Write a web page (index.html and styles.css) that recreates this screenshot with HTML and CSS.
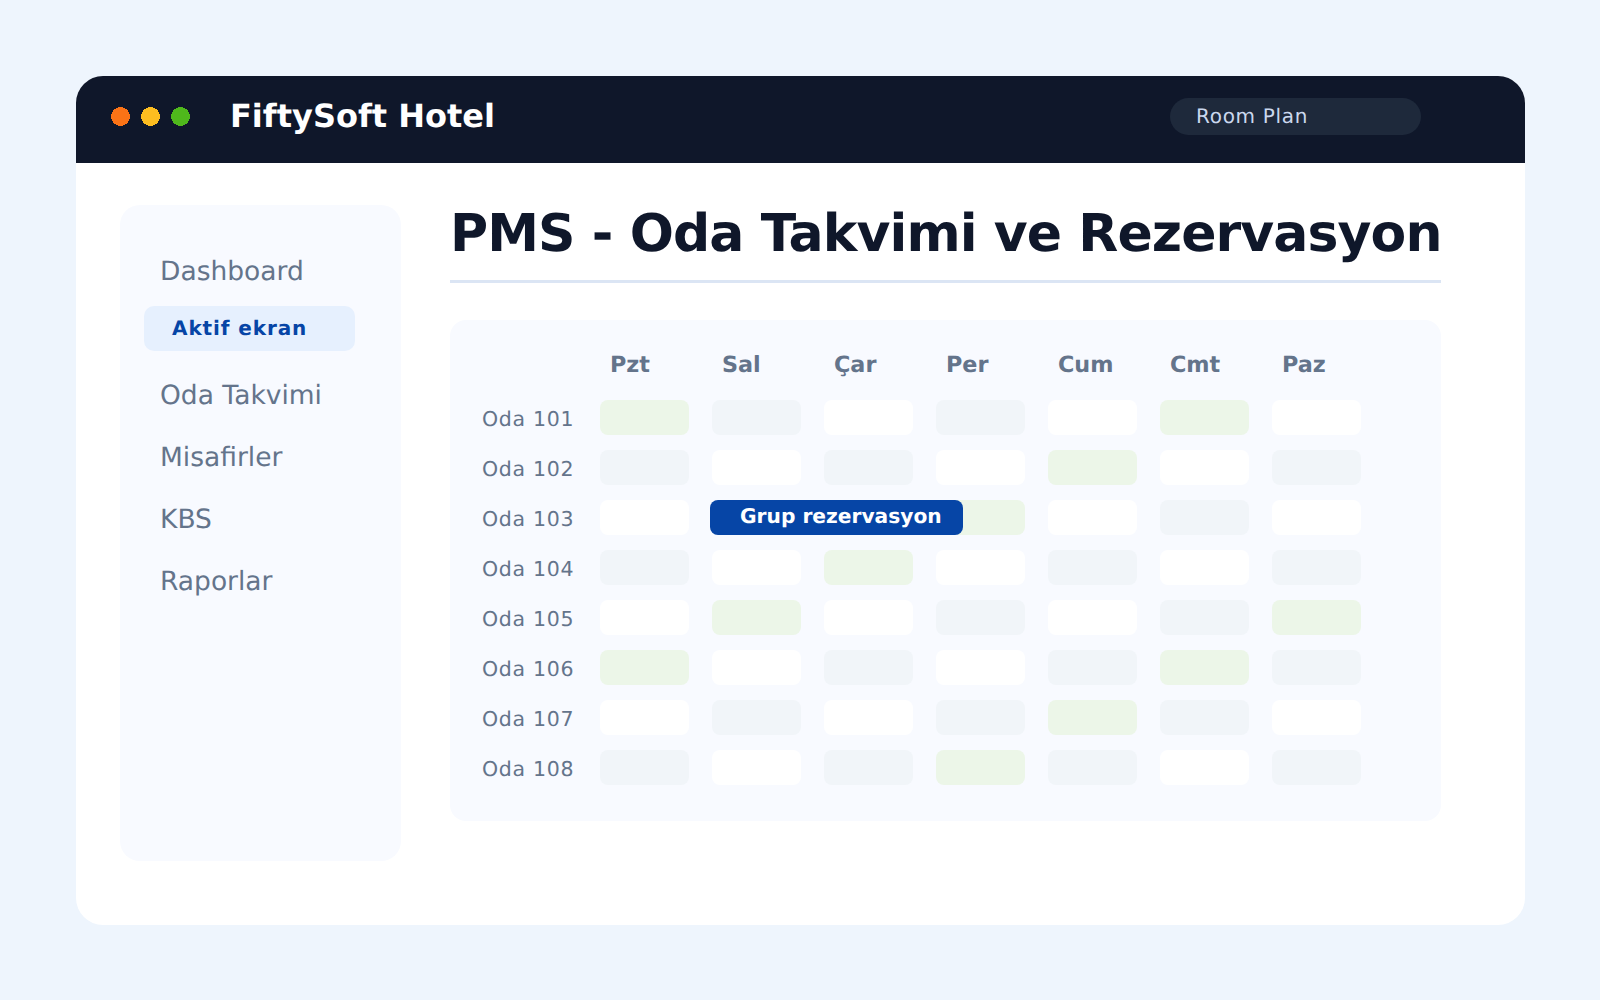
FILE: index.html
```html
<!DOCTYPE html>
<html lang="tr">
<head>
<meta charset="utf-8">
<title>FiftySoft Hotel</title>
<link rel="stylesheet" href="styles.css">
</head>
<body>
<div class="window">
  <header class="topbar">
    <svg class="dots" viewBox="0 0 79 19" width="79" height="19" aria-hidden="true">
      <circle class="orange" cx="9.5" cy="9.5" r="9.5"/>
      <circle class="yellow" cx="39.5" cy="9.5" r="9.5"/>
      <circle class="green" cx="69.5" cy="9.5" r="9.5"/>
    </svg>
    <div class="brand">FiftySoft Hotel</div>
    <div class="pill">Room Plan</div>
  </header>
  <div class="body">
    <aside class="sidebar">
      <div class="nav-item first">Dashboard</div>
      <div class="nav-active">Aktif ekran</div>
      <div class="nav-item">Oda Takvimi</div>
      <div class="nav-item">Misafirler</div>
      <div class="nav-item">KBS</div>
      <div class="nav-item">Raporlar</div>
    </aside>
    <main class="main">
      <h1 class="title">PMS - Oda Takvimi ve Rezervasyon</h1>
      <section class="card">
        <div class="grid">
          <div></div><div class="day">Pzt</div><div class="day">Sal</div><div class="day">Çar</div><div class="day">Per</div><div class="day">Cum</div><div class="day">Cmt</div><div class="day">Paz</div>

          <div class="room">Oda 101</div><div class="cell g"></div><div class="cell s"></div><div class="cell w"></div><div class="cell s"></div><div class="cell w"></div><div class="cell g"></div><div class="cell w"></div>
          <div class="room">Oda 102</div><div class="cell s"></div><div class="cell w"></div><div class="cell s"></div><div class="cell w"></div><div class="cell g"></div><div class="cell w"></div><div class="cell s"></div>
          <div class="room">Oda 103</div><div class="cell w"></div><div class="cell w anchor"><div class="booking">Grup rezervasyon</div></div><div class="cell s"></div><div class="cell g"></div><div class="cell w"></div><div class="cell s"></div><div class="cell w"></div>
          <div class="room">Oda 104</div><div class="cell s"></div><div class="cell w"></div><div class="cell g"></div><div class="cell w"></div><div class="cell s"></div><div class="cell w"></div><div class="cell s"></div>
          <div class="room">Oda 105</div><div class="cell w"></div><div class="cell g"></div><div class="cell w"></div><div class="cell s"></div><div class="cell w"></div><div class="cell s"></div><div class="cell g"></div>
          <div class="room">Oda 106</div><div class="cell g"></div><div class="cell w"></div><div class="cell s"></div><div class="cell w"></div><div class="cell s"></div><div class="cell g"></div><div class="cell s"></div>
          <div class="room">Oda 107</div><div class="cell w"></div><div class="cell s"></div><div class="cell w"></div><div class="cell s"></div><div class="cell g"></div><div class="cell s"></div><div class="cell w"></div>
          <div class="room">Oda 108</div><div class="cell s"></div><div class="cell w"></div><div class="cell s"></div><div class="cell g"></div><div class="cell s"></div><div class="cell w"></div><div class="cell s"></div>
        </div>
      </section>
    </main>
  </div>
</div>
</body>
</html>
```
FILE: styles.css
```css
* { box-sizing: border-box; }
html, body { margin: 0; height: 100%; }
body {
  background: #eef5fd;
  font-family: "DejaVu Sans", sans-serif;
  text-rendering: geometricPrecision;
  padding: 76px 75px 75px 76px;
  overflow: hidden;
}
.window {
  width: 1449px;
  height: 849px;
  background: #fff;
  border-radius: 27px;
  overflow: hidden;
}
.topbar {
  height: 87px;
  background: #0f172a;
  display: flex;
  align-items: center;
  padding-left: 35px;
  padding-bottom: 7px;
}
.dots { display: block; flex: none; shape-rendering: crispEdges; }
.orange { fill: #fb7316; }
.yellow { fill: #fdbd20; }
.green { fill: #4fb81c; }
.brand {
  margin-left: 40px;
  color: #fff;
  font-size: 32px;
  font-weight: 700;
  margin-bottom: 1px;
}
.pill {
  margin-left: auto;
  margin-right: 104px;
  width: 251px;
  height: 37px;
  border-radius: 18.5px;
  background: #1e293b;
  color: #cbd8ee;
  font-size: 20px;
  letter-spacing: 0.7px;
  line-height: 37px;
  padding-left: 26px;
}
.body {
  display: flex;
  padding: 42px 84px 0 44px;
  gap: 49px;
}
.sidebar {
  width: 281px;
  height: 656px;
  background: #f8faff;
  border-radius: 20px;
  padding: 49px 0 0 24px;
  flex: none;
}
.nav-item {
  color: #64748b;
  font-size: 26.5px;
  line-height: 36px;
  padding-left: 16px;
  margin-bottom: 26px;
}
.nav-item.first { margin-bottom: 16px; }
.nav-active {
  width: 211px;
  height: 45px;
  border-radius: 10px;
  background: #e6f0fe;
  color: #0645a6;
  font-size: 20px;
  letter-spacing: 0.9px;
  font-weight: 700;
  line-height: 44px;
  padding-left: 28px;
  margin-bottom: 27px;
}
.main { width: 991px; flex: none; }
.title {
  margin: 0;
  height: 78px;
  color: #0f172a;
  font-size: 52px;
  letter-spacing: -0.9px;
  font-weight: 700;
  line-height: 52px;
  padding-top: 3px;
  white-space: nowrap;
  border-bottom: 3px solid #dbe5f4;
}
.card {
  margin-top: 37px;
  height: 501px;
  background: #f8faff;
  border-radius: 16px;
  padding: 30px 0 0 32px;
}
.grid {
  display: grid;
  grid-template-columns: 95px repeat(7, 89px);
  column-gap: 23px;
  grid-template-rows: 35px repeat(8, 35px);
  row-gap: 15px;
}
.day {
  color: #64748b;
  font-size: 22.3px;
  font-weight: 700;
  line-height: 31px;
  padding-left: 10px;
}
.room {
  color: #64748b;
  font-size: 20.5px;
  letter-spacing: 0.7px;
  line-height: 38px;
  white-space: nowrap;
}
.cell { border-radius: 8px; }
.cell.g { background: #ecf6e8; }
.cell.s { background: #f1f5f9; }
.cell.w { background: #fff; }
.anchor { position: relative; }
.booking {
  position: absolute;
  left: -2px;
  top: 0;
  width: 253px;
  height: 35px;
  border-radius: 8px;
  background: #0645a6;
  color: #fff;
  font-size: 20.2px;
  font-weight: 700;
  line-height: 33px;
  padding-left: 30px;
  white-space: nowrap;
}
```
